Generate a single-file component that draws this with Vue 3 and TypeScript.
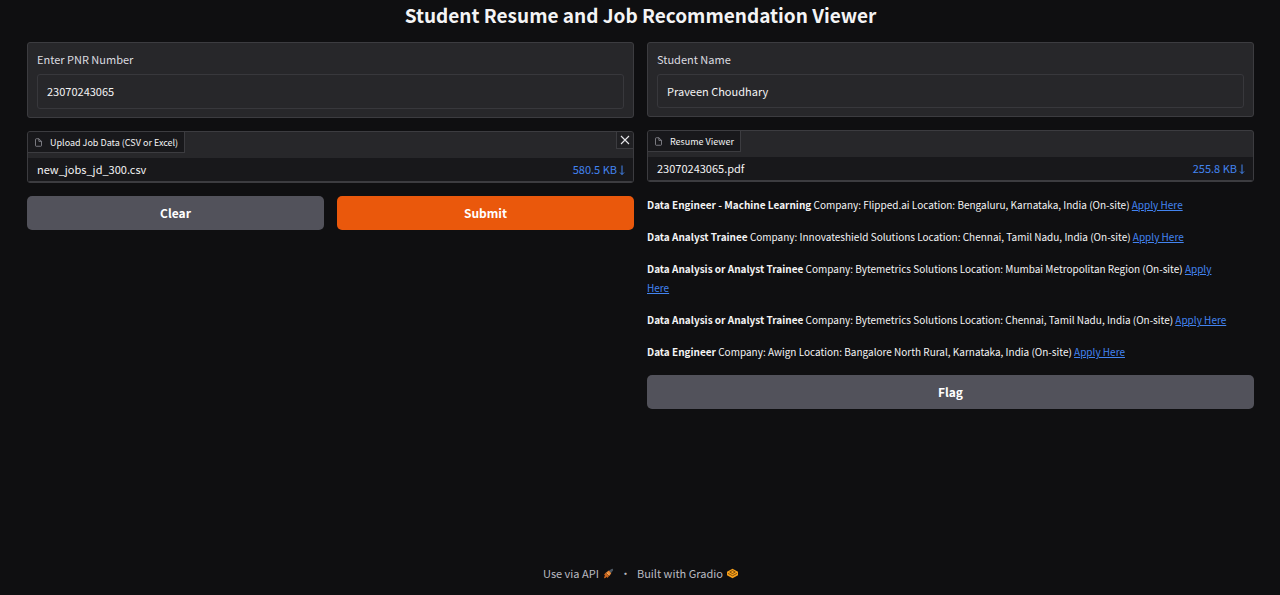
<script setup lang="ts">
import { ref } from 'vue'

interface Job {
  title: string
  details: string
}

const pnr = ref('23070243065')
const studentName = ref('Praveen Choudhary')

const jobs: Job[] = [
  { title: 'Data Engineer - Machine Learning', details: 'Company: Flipped.ai Location: Bengaluru, Karnataka, India (On-site)' },
  { title: 'Data Analyst Trainee', details: 'Company: Innovateshield Solutions Location: Chennai, Tamil Nadu, India (On-site)' },
  { title: 'Data Analysis or Analyst Trainee', details: 'Company: Bytemetrics Solutions Location: Mumbai Metropolitan Region (On-site)' },
  { title: 'Data Analysis or Analyst Trainee', details: 'Company: Bytemetrics Solutions Location: Chennai, Tamil Nadu, India (On-site)' },
  { title: 'Data Engineer', details: 'Company: Awign Location: Bangalore North Rural, Karnataka, India (On-site)' },
]
</script>

<template>
  <div class="page">
    <main>
      <h1>Student Resume and Job Recommendation Viewer</h1>
      <div class="columns">
        <section class="column">
          <div class="block field">
            <label for="pnr">Enter PNR Number</label>
            <input id="pnr" v-model="pnr" class="tall" type="text" />
          </div>
          <div class="block file">
            <div class="file-head">
              <span class="tag">
                <svg viewBox="0 0 24 24" aria-hidden="true"><path d="M13 2H6a2 2 0 0 0-2 2v16a2 2 0 0 0 2 2h12a2 2 0 0 0 2-2V9z" /><path d="M13 2v7h7" /></svg>
                Upload Job Data (CSV or Excel)
              </span>
              <button class="close" type="button" aria-label="Clear file">
                <svg viewBox="0 0 12 12" aria-hidden="true"><path d="M2 2l8 8M10 2l-8 8" /></svg>
              </button>
            </div>
            <div class="file-row">
              <span>new_jobs_jd_300.csv</span>
              <a href="#">580.5 KB <svg viewBox="0 0 6 12" aria-hidden="true"><path d="M3 1.500v9M1 8.500L3 10.500 5 8.500" /></svg></a>
            </div>
          </div>
          <div class="actions">
            <button class="btn" type="button">Clear</button>
            <button class="btn primary" type="button">Submit</button>
          </div>
        </section>

        <section class="column">
          <div class="block field">
            <label for="student">Student Name</label>
            <input id="student" v-model="studentName" type="text" />
          </div>
          <div class="block file">
            <div class="file-head">
              <span class="tag">
                <svg viewBox="0 0 24 24" aria-hidden="true"><path d="M13 2H6a2 2 0 0 0-2 2v16a2 2 0 0 0 2 2h12a2 2 0 0 0 2-2V9z" /><path d="M13 2v7h7" /></svg>
                Resume Viewer
              </span>
            </div>
            <div class="file-row">
              <span>23070243065.pdf</span>
              <a href="#">255.8 KB <svg viewBox="0 0 6 12" aria-hidden="true"><path d="M3 1.500v9M1 8.500L3 10.500 5 8.500" /></svg></a>
            </div>
          </div>
          <div class="jobs">
            <p v-for="(job, i) in jobs" :key="i">
              <strong>{{ job.title }}</strong> {{ job.details }} <a href="#">Apply Here</a>
            </p>
          </div>
          <button class="btn" type="button">Flag</button>
        </section>
      </div>
    </main>

    <footer>
      <a href="#">
        Use via API
        <svg viewBox="0 0 12 12" aria-hidden="true">
          <path d="M6.500 3L9.200 1l1.800-.2-.1 1.900-2.300 3z" fill="#4c5660" />
          <path d="M3.400 4.800l2.900-2 2.700 2.800-2 3z" fill="#e8893a" />
          <path d="M1.200 7.200l2-2.200 3.500 3.700-2 2.200-.8-1.300-1.200 1.200-1.600.3.300-1.500.8-1.200z" fill="#c9641d" />
          <path d="M4.300 5.200l2.300 2.300" stroke="#ffc069" stroke-width="1" />
        </svg>
      </a>
      <span>·</span>
      <a href="#">
        Built with Gradio
        <svg viewBox="0 0 12 12" aria-hidden="true">
          <path d="M6 .8l6 3.200v4L6 11.200 0 8V4z" fill="#f9a11b" />
          <path d="M3 4.400L6 2.800l3 1.600L6 6zM1 5.800l5 2.700 5-2.700" fill="none" stroke="#5a3606" stroke-width=".8" />
        </svg>
      </a>
    </footer>
  </div>
</template>

<style>
body {
  margin: 0;
  background: #0f0f11;
}
</style>

<style scoped>
.page {
  box-sizing: border-box;
  min-height: 100vh;
  display: flex;
  flex-direction: column;
  justify-content: space-between;
  padding: 0 26px 12px 27px;
  background: #0f0f11;
  color: #f4f4f5;
  font-family: "Noto Sans CJK SC", "Open Sans", sans-serif;
  font-size: 11px;
  line-height: 19px;
}
h1 {
  margin: 0 0 12px;
  font-size: 19px;
  line-height: 30px;
  font-weight: 700;
  text-align: center;
}
.columns {
  display: grid;
  grid-template-columns: 1fr 1fr;
  gap: 13px;
  align-items: start;
}
.column {
  display: flex;
  flex-direction: column;
  gap: 13px;
  min-width: 0;
}
.block {
  border: 1px solid #3c3c40;
  border-radius: 3px;
  background: #27272a;
  overflow: hidden;
}
.field {
  display: flex;
  flex-direction: column;
  gap: 5px;
  padding: 7px 9px 8px;
}
.field label {
  color: #dcdce0;
}
input {
  box-sizing: border-box;
  width: 100%;
  height: 34px;
  padding: 0 9px 1px;
  border: 1px solid #38383c;
  border-radius: 3px;
  background: transparent;
  color: inherit;
  font: inherit;
}
input.tall {
  height: 35px;
}
.file-head {
  display: flex;
  justify-content: space-between;
  align-items: flex-start;
  height: 26px;
}
.tag {
  display: flex;
  align-items: center;
  gap: 7px;
  height: 20px;
  padding: 0 6px;
  border-right: 1px solid #3c3c40;
  border-bottom: 1px solid #3c3c40;
  background: #18181b;
  font-size: 9px;
}
.tag svg {
  width: 9px;
  height: 9px;
  fill: none;
  stroke: #9a9aa2;
  stroke-width: 2;
}
.close {
  display: grid;
  place-items: center;
  width: 17px;
  height: 17px;
  padding: 0;
  border: 0;
  border-left: 1px solid #3c3c40;
  border-bottom: 1px solid #3c3c40;
  background: #202023;
}
.close svg {
  width: 12px;
  height: 12px;
  fill: none;
  stroke: #e6e6e9;
  stroke-width: 1.1;
}
.file-row {
  display: flex;
  justify-content: space-between;
  align-items: center;
  height: 23px;
  padding: 0 8px 0 9px;
  border-bottom: 1px solid #3c3c40;
  background: #18181b;
}
.file-row a {
  display: flex;
  align-items: center;
  gap: 2px;
  color: #4384f0;
  text-decoration: none;
}
.file-row svg {
  width: 6px;
  height: 12px;
  fill: none;
  stroke: #4384f0;
  stroke-width: 1;
}
.actions {
  display: flex;
  gap: 13px;
}
.btn {
  flex: 1;
  min-height: 34px;
  padding: 0 0 1px;
  border: 0;
  border-radius: 5px;
  background: #52525b;
  color: #fff;
  font: inherit;
  font-size: 12px;
  font-weight: 700;
}
.btn.primary {
  background: #ea580c;
}
.jobs {
  display: flex;
  flex-direction: column;
  gap: 13px;
  padding: 0 20px 1px 0;
  font-size: 10px;
}
.jobs p {
  margin: 0;
}
.jobs a {
  color: #4384f0;
}
footer {
  display: flex;
  justify-content: center;
  align-items: center;
  gap: 6px;
  color: #bbbbc2;
}
footer a {
  display: flex;
  align-items: center;
  gap: 4px;
  color: inherit;
  text-decoration: none;
}
footer svg {
  width: 11px;
  height: 11px;
}
</style>
